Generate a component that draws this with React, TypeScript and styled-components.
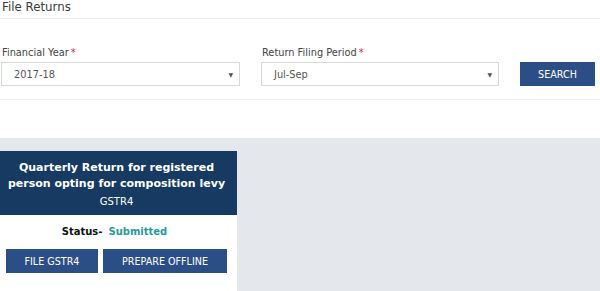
import { FC } from 'react'
import styled, { createGlobalStyle } from 'styled-components'

const GlobalStyle = createGlobalStyle`
  html, body {
    margin: 0;
    padding: 0;
    background: #fff;
    font-family: "DejaVu Sans", Verdana, sans-serif;
  }
`

const Page = styled.div`
  width: 600px;
  height: 291px;
  display: flex;
  flex-direction: column;
  overflow: hidden;
`

const Header = styled.div`
  height: 18px;
  padding: 0 2px;
  border-bottom: 1px solid #ececec;

  .title {
    font-size: 11.8px;
    line-height: 14px;
    color: #3a3a3a;
  }
`

const Filters = styled.div`
  display: grid;
  grid-template-columns: 239px 238px 75px;
  column-gap: 21px;
  align-items: end;
  padding: 27px 0 13px 1px;
  border-bottom: 1px solid #ececec;
`

const Field = styled.div`
  display: flex;
  flex-direction: column;

  .label {
    font-size: 9.8px;
    line-height: 14px;
    color: #444;
    margin-bottom: 2px;
    padding-left: 1px;

    span {
      color: #d42a2a;
      margin-left: 2px;
    }
  }
`

const Select = styled.div`
  height: 24px;
  box-sizing: border-box;
  border: 1px solid #d9d9d9;
  display: flex;
  align-items: center;
  justify-content: space-between;
  padding: 0 6px 0 12px;
  font-size: 9.8px;
  color: #555;

  .arrow {
    font-size: 6px;
    color: #555;
  }
`

const Button = styled.button<{ $width: number }>`
  width: ${p => p.$width}px;
  height: 24px;
  border: none;
  padding: 0;
  background: #2c4e86;
  color: #fff;
  font-family: "DejaVu Sans", Verdana, sans-serif;
  font-size: 9.6px;
  text-transform: uppercase;
  cursor: pointer;
`

const Gap = styled.div`
  height: 38px;
`

const Board = styled.div`
  flex: 1;
  background: #e4e7eb;
  padding-top: 13px;
`

const Card = styled.div`
  width: 237px;
  background: #fff;
  height: 100%;
`

const CardHead = styled.div`
  background: #163a62;
  color: #fff;
  text-align: center;
  padding: 9px 4px 5px 0;

  .name {
    font-size: 11px;
    font-weight: bold;
    line-height: 16px;
  }
  .code {
    font-size: 10px;
    line-height: 16px;
    margin-top: 2px;
  }
`

const Status = styled.div`
  text-align: center;
  font-size: 10px;
  font-weight: bold;
  line-height: 16px;
  padding: 9px 8px 0 0;
  color: #111;

  span {
    color: #2a9b9c;
    margin-left: 6px;
  }
`

const Actions = styled.div`
  display: flex;
  gap: 5px;
  padding: 9px 0 0 6px;
`

const App: FC = () => {
  return (
    <Page>
      <GlobalStyle />
      <Header>
        <div className="title">File Returns</div>
      </Header>
      <Filters>
        <Field>
          <div className="label">
            Financial Year<span>*</span>
          </div>
          <Select>
            2017-18<span className="arrow">▼</span>
          </Select>
        </Field>
        <Field>
          <div className="label">
            Return Filing Period<span>*</span>
          </div>
          <Select>
            Jul-Sep<span className="arrow">▼</span>
          </Select>
        </Field>
        <Button $width={75}>Search</Button>
      </Filters>
      <Gap />
      <Board>
        <Card>
          <CardHead>
            <div className="name">Quarterly Return for registered</div>
            <div className="name">person opting for composition levy</div>
            <div className="code">GSTR4</div>
          </CardHead>
          <Status>
            Status-<span>Submitted</span>
          </Status>
          <Actions>
            <Button $width={92}>File GSTR4</Button>
            <Button $width={124}>Prepare Offline</Button>
          </Actions>
        </Card>
      </Board>
    </Page>
  )
}

export default App
